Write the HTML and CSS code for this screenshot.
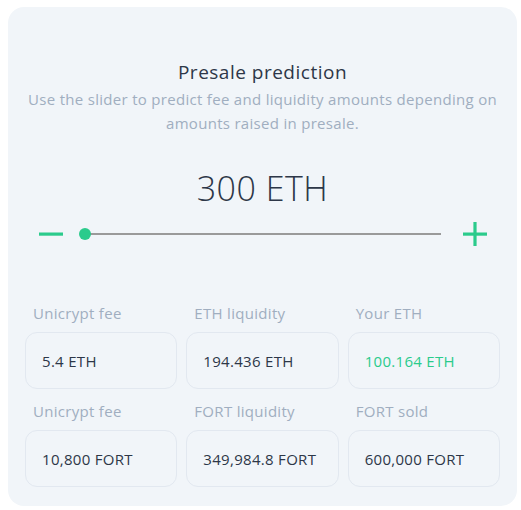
FILE: index.html
```html
<!DOCTYPE html>
<html>
<head>
<meta charset="utf-8">
<link rel="stylesheet" href="styles.css">
</head>
<body>
<div class="card">
  <div class="title">Presale prediction</div>
  <div class="subtitle">Use the slider to predict fee and liquidity amounts depending on amounts raised in presale.</div>
  <div class="amount">300 ETH</div>
  <div class="slider-row">
    <svg class="btn" width="24" height="24" viewBox="0 0 24 24"><rect x="0" y="10.5" width="24" height="3.2" fill="#2bcb8c"/></svg>
    <div class="track"><div class="thumb"></div></div>
    <svg class="btn" width="24" height="24" viewBox="0 0 24 24"><rect x="0" y="10.5" width="24" height="3.2" fill="#2bcb8c"/><rect x="10.4" y="0" width="3.2" height="24" fill="#2bcb8c"/></svg>
  </div>
  <div class="grid">
    <div class="cell"><div class="label">Unicrypt fee</div><div class="box">5.4 ETH</div></div>
    <div class="cell"><div class="label">ETH liquidity</div><div class="box">194.436 ETH</div></div>
    <div class="cell"><div class="label">Your ETH</div><div class="box green">100.164 ETH</div></div>
    <div class="cell"><div class="label">Unicrypt fee</div><div class="box">10,800 FORT</div></div>
    <div class="cell"><div class="label">FORT liquidity</div><div class="box">349,984.8 FORT</div></div>
    <div class="cell"><div class="label">FORT sold</div><div class="box">600,000 FORT</div></div>
  </div>
</div>
</body>
</html>
```
FILE: styles.css
```css
html, body { margin: 0; padding: 0; background: #fff; }
body { padding: 7px 4px 5px 8px; font-family: "Open Sans", "Noto Sans", sans-serif; }
.card {
  background: #f1f5f9;
  border-radius: 16px;
  padding: 51px 17px 19px 17px;
  width: 475px;
  color: #2d3748;
}
.title { text-align: center; font-size: 19px; line-height: 28px; letter-spacing: 0.5px; color: #2d3748; }
.subtitle { text-align: center; font-size: 15px; line-height: 24px; letter-spacing: 0.3px; color: #a0aec0; margin-top: 1px; }
.amount { text-align: center; font-size: 34px; font-weight: 300; line-height: 40px; letter-spacing: 0.5px; margin-top: 33px; color: #2d3748; }
.slider-row { display: flex; align-items: center; margin-top: 14px; padding: 0 13px 0 14px; }
.btn { display: block; flex: none; }
.track { flex: 1; height: 2px; background: #9a9a9a; margin: 0 22px 0 22px; position: relative; }
.thumb { position: absolute; left: -6px; top: -5px; width: 12px; height: 12px; border-radius: 50%; background: #2bcb8c; }
.grid { display: grid; grid-template-columns: repeat(3, 1fr); column-gap: 9px; row-gap: 12px; margin-top: 57px; }
.label { font-size: 15px; line-height: 20px; letter-spacing: 0.3px; color: #a0aec0; padding-left: 8px; margin-bottom: 9px; }
.box { height: 55px; border: 1px solid #e2e8f0; border-radius: 12px; display: flex; align-items: center; padding-left: 16px; font-size: 15px; letter-spacing: 0.3px; color: #2d3748; }
.box.green { color: #2bcb8c; }
```
